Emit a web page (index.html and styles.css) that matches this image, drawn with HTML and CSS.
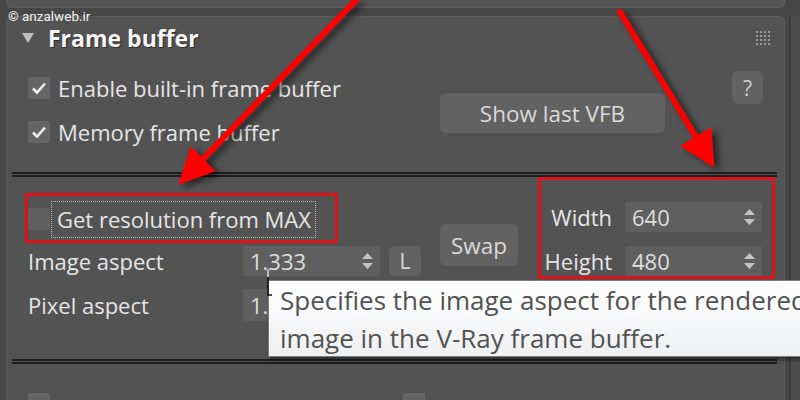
FILE: index.html
```html
<!DOCTYPE html>
<html lang="en">
<head>
  <meta charset="UTF-8">
  <title>Frame buffer</title>
  <link rel="stylesheet" href="styles.css">
</head>
<body>
  <div class="screen">
    <div class="prev-rollout"></div>
    <div class="watermark">© anzalweb.ir</div>

    <div class="main">
      <div class="rollout">
        <div class="rollout-head">
          <span class="caret"></span>
          <span class="title">Frame buffer</span>
          <svg class="grip" width="14" height="14" viewBox="0 0 14 14">
            <g fill="#9a9a9a">
              <rect x="0" y="0" width="2" height="2"/><rect x="4" y="0" width="2" height="2"/><rect x="8" y="0" width="2" height="2"/><rect x="12" y="0" width="2" height="2"/>
              <rect x="0" y="4" width="2" height="2"/><rect x="4" y="4" width="2" height="2"/><rect x="8" y="4" width="2" height="2"/><rect x="12" y="4" width="2" height="2"/>
              <rect x="0" y="8" width="2" height="2"/><rect x="4" y="8" width="2" height="2"/><rect x="8" y="8" width="2" height="2"/><rect x="12" y="8" width="2" height="2"/>
              <rect x="0" y="12" width="2" height="2"/><rect x="4" y="12" width="2" height="2"/><rect x="8" y="12" width="2" height="2"/><rect x="12" y="12" width="2" height="2"/>
            </g>
          </svg>
        </div>

        <div class="group group-vfb">
          <div class="checks">
            <label class="check">
              <span class="box"><svg width="22" height="22" viewBox="0 0 22 22"><path d="M5 11.5l4 4 8-9" fill="none" stroke="#ececec" stroke-width="2.6"/></svg></span>
              Enable built-in frame buffer
            </label>
            <label class="check">
              <span class="box"><svg width="22" height="22" viewBox="0 0 22 22"><path d="M5 11.5l4 4 8-9" fill="none" stroke="#ececec" stroke-width="2.6"/></svg></span>
              Memory frame buffer
            </label>
          </div>
          <button class="btn btn-vfb">Show last VFB</button>
          <button class="btn btn-help">?</button>
        </div>

        <div class="sep"></div>

        <div class="group group-res">
          <label class="check check-res">
            <span class="box"></span>
            <span class="focus">Get resolution from MAX</span>
          </label>
          <span class="lbl lbl-img">Image aspect</span>
          <div class="spin spin-img">
            <span>1.333</span>
            <svg width="11" height="18" viewBox="0 0 11 18"><path d="M0 7L5.5 1 11 7z M0 11l5.5 6 5.5-6z" fill="#c4c4c4"/></svg>
          </div>
          <button class="btn btn-lock">L</button>
          <span class="lbl lbl-pix">Pixel aspect</span>
          <div class="spin spin-pix">
            <span>1.0</span>
            <svg width="11" height="18" viewBox="0 0 11 18"><path d="M0 7L5.5 1 11 7z M0 11l5.5 6 5.5-6z" fill="#c4c4c4"/></svg>
          </div>
          <button class="btn btn-swap">Swap</button>
          <span class="lbl lbl-w">Width</span>
          <div class="spin spin-w">
            <span>640</span>
            <svg width="11" height="18" viewBox="0 0 11 18"><path d="M0 7L5.5 1 11 7z M0 11l5.5 6 5.5-6z" fill="#c4c4c4"/></svg>
          </div>
          <span class="lbl lbl-h">Height</span>
          <div class="spin spin-h">
            <span>480</span>
            <svg width="11" height="18" viewBox="0 0 11 18"><path d="M0 7L5.5 1 11 7z M0 11l5.5 6 5.5-6z" fill="#c4c4c4"/></svg>
          </div>
        </div>

        <div class="sep"></div>

        <div class="group group-raw">
          <label class="check check-raw"><span class="box"></span>V-Ray raw image file</label>
          <label class="check"><span class="box"></span>Separate render channels</label>
        </div>
      </div>
      <div class="scrollbar"></div>
    </div>

    <!-- annotations laid over the screenshot -->
    <svg class="arrows" width="800" height="400" viewBox="0 0 800 400">
      <g fill="#ff0000" stroke="#ff0000">
        <line x1="362" y1="-6" x2="203" y2="159" stroke-width="6" stroke-linecap="round"/>
        <polygon points="179,184 191,147 215,171" stroke-width="1"/>
        <line x1="620" y1="12" x2="696" y2="137" stroke-width="6" stroke-linecap="round"/>
        <polygon points="714,167 681,146 711,128" stroke-width="1"/>
      </g>
    </svg>
    <div class="mark mark-res"></div>
    <div class="mark mark-size"></div>

    <div class="tooltip">Specifies the image aspect for the rendered<br>image in the V-Ray frame buffer.</div>
    <svg class="cursor" width="10" height="30" viewBox="0 0 10 30">
      <path d="M3 1v8" stroke="#bdbdbd" stroke-width="2"/>
      <path d="M1 2h5" stroke="#9a9a9a" stroke-width="1"/>
      <path d="M3 9v19 M3 27h4" stroke="#111" stroke-width="1.5" fill="none"/>
    </svg>
  </div>
</body>
</html>
```

FILE: styles.css
```css
* {
  box-sizing: border-box;
}
body {
  margin: 0;
  background: #474747;
  font-family: "Open Sans", "Noto Sans", sans-serif;
  color: #e6e6e6;
}
.screen {
  position: relative;
  width: 800px;
  height: 400px;
  overflow: hidden;
}
.prev-rollout {
  margin-left: 6px;
  width: 779px;
  height: 8px;
  background: #555;
  border: 1px solid #5d5d5d;
  border-top: none;
  border-radius: 0 0 5px 5px;
}
.watermark {
  position: absolute;
  left: 8px;
  top: 8px;
  font-family: Roboto, sans-serif;
  font-size: 13.5px;
  color: #f2f2f2;
}
.main {
  display: flex;
  margin-top: 8px;
  margin-left: 6px;
}
.rollout {
  width: 779px;
  height: 400px;
  background: #535353;
  border: 1px solid #5c5c5c;
  border-radius: 5px 5px 0 0;
}
.scrollbar {
  width: 15px;
  border-left: 4px solid #474747;
  background: #4e4e4e;
  box-shadow: inset 2px 0 0 #3c3c3c;
}
.rollout-head {
  display: flex;
  align-items: center;
  height: 42px;
  padding-left: 15px;
  padding-right: 14px;
}
.caret {
  width: 0;
  height: 0;
  border-left: 6px solid transparent;
  border-right: 6px solid transparent;
  border-top: 10px solid #bdbdbd;
}
.title {
  margin-left: 14px;
  font-size: 23px;
  font-weight: bold;
  color: #f6f6f6;
  text-shadow: 1px 1px 1px #2a2a2a;
}
.grip {
  margin-left: auto;
}

.group {
  padding-left: 21px;
}
.group-vfb {
  display: flex;
  align-items: flex-start;
  height: 113px;
  padding-top: 12px;
  padding-right: 21px;
}
.checks {
  display: flex;
  flex-direction: column;
  gap: 14px;
  width: 412px;
  margin-top: 2px;
}
.check {
  display: flex;
  align-items: center;
  height: 30px;
  font-size: 22px;
  white-space: nowrap;
}
.box {
  display: flex;
  flex: none;
  width: 22px;
  height: 22px;
  margin-right: 8px;
  background: #656565;
  border-radius: 2px;
}
.btn {
  border: none;
  border-radius: 6px;
  background: #626262;
  color: #dadada;
  font-family: inherit;
  font-size: 22.5px;
  padding: 0;
}
.btn-vfb {
  width: 225px;
  height: 40px;
  margin-top: 22px;
}
.btn-help {
  width: 31px;
  height: 33px;
  margin-left: auto;
  font-size: 21px;
  color: #d0d0d0;
}

.sep {
  height: 5px;
  margin: 0 7px 0 5px;
  border-top: 2px solid #1d1d1d;
  border-bottom: 2px solid #1d1d1d;
}

.group-res {
  display: grid;
  grid-template-columns: 215px 146px 51px 108px 77px 137px;
  grid-template-rows: 30px 30px 30px;
  row-gap: 14px;
  align-items: center;
  height: 182px;
  padding-top: 25px;
}
.check-res {
  grid-column: 1 / 3;
  grid-row: 1;
  margin-top: 4px;
}
.check-res .box {
  background: #5f5f5f;
  margin-right: 2px;
}
.focus {
  padding: 3px 4px 4px 5px;
  outline: 1px dotted #b5b5b5;
  line-height: 28px;
}
.lbl {
  font-size: 22px;
  white-space: nowrap;
}
.lbl-img { grid-column: 1; grid-row: 2; }
.lbl-pix { grid-column: 1; grid-row: 3; }
.lbl-w { grid-column: 5; grid-row: 1; justify-self: end; padding-right: 13px; }
.lbl-h { grid-column: 5; grid-row: 2; justify-self: end; padding-right: 13px; }
.spin {
  display: flex;
  align-items: center;
  justify-content: space-between;
  width: 137px;
  height: 30px;
  padding: 0 7px 0 7px;
  background: #5f5f5f;
  border-radius: 2px;
  font-size: 22px;
  color: #dedede;
}
.spin-img { grid-column: 2; grid-row: 2; }
.spin-pix { grid-column: 2; grid-row: 3; height: 32px; }
.spin-w { grid-column: 6; grid-row: 1; }
.spin-h { grid-column: 6; grid-row: 2; }
.btn-lock {
  grid-column: 3;
  grid-row: 2;
  width: 32px;
  height: 30px;
  font-size: 21px;
}
.btn-swap {
  grid-column: 4;
  grid-row: 1 / 3;
  align-self: end;
  width: 78px;
  height: 42px;
  margin-bottom: 10px;
}

.group-raw {
  display: flex;
  padding-top: 29px;
}
.group-raw .check {
  align-items: flex-start;
  line-height: 28px;
}
.check-raw {
  width: 375px;
}

.arrows {
  position: absolute;
  left: 0;
  top: 0;
  filter: drop-shadow(5px 3px 3px rgba(0, 0, 0, 0.55));
}
.mark {
  position: absolute;
  border: 3px solid #de1219;
}
.mark-res {
  left: 25px;
  top: 193px;
  width: 313px;
  height: 50px;
}
.mark-size {
  left: 538px;
  top: 177px;
  width: 237px;
  height: 102px;
}
.tooltip {
  position: absolute;
  left: 268px;
  top: 280px;
  width: 545px;
  height: 77px;
  padding: 0 0 0 11px;
  background: linear-gradient(#ffffff, #eef0f2);
  border: 1px solid #7c7c7c;
  box-shadow: 2px 3px 4px rgba(0, 0, 0, 0.45);
  font-size: 26px;
  line-height: 38px;
  color: #525252;
  white-space: nowrap;
}
.cursor {
  position: absolute;
  left: 265px;
  top: 268px;
}
```
